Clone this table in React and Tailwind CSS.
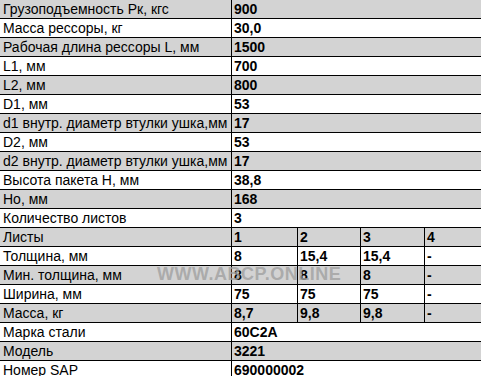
import React from 'react';

const rows = [
  ['Грузоподъемность Рк, кгс', '900'],
  ['Масса рессоры, кг', '30,0'],
  ['Рабочая длина рессоры L, мм', '1500'],
  ['L1, мм', '700'],
  ['L2, мм', '800'],
  ['D1, мм', '53'],
  ['d1 внутр. диаметр втулки ушка,мм', '17'],
  ['D2, мм', '53'],
  ['d2 внутр. диаметр втулки ушка,мм', '17'],
  ['Высота пакета H, мм', '38,8'],
  ['Но, мм', '168'],
  ['Количество листов', '3'],
  ['Листы', ['1', '2', '3', '4']],
  ['Толщина, мм', ['8', '15,4', '15,4', '-']],
  ['Мин. толщина, мм', ['8', '8', '8', '-']],
  ['Ширина, мм', ['75', '75', '75', '-']],
  ['Масса, кг', ['8,7', '9,8', '9,8', '-']],
  ['Марка стали', '60C2A'],
  ['Модель', '3221'],
  ['Номер SAP', '690000002'],
];

const subWidths = ['w-[66px]', 'w-[63px]', 'w-[64px]', 'flex-1'];

export default function App() {
  return (
    <div className="relative w-[481px] h-[376px] overflow-hidden bg-white text-black text-[14px] font-['Liberation_Sans',Arial,sans-serif]">
      {rows.map(([label, value], i) => (
        <div
          key={label}
          className={`flex h-[19px] border-b border-black leading-[18px] ${i % 2 === 0 ? 'bg-[#d3d3d3]' : 'bg-white'}`}
        >
          <div className="w-[232px] shrink-0 border-r border-black pl-[3px] whitespace-nowrap overflow-hidden">
            {label}
          </div>
          {Array.isArray(value) ? (
            value.map((v, j) => (
              <div
                key={j}
                className={`${subWidths[j]} shrink-0 pl-[2px] font-bold ${j < 3 ? 'border-r border-black' : ''}`}
              >
                {v}
              </div>
            ))
          ) : (
            <div className="flex-1 pl-[2px] font-bold">{value}</div>
          )}
        </div>
      ))}

      {/* водяной знак */}
      <div className="absolute left-[157px] top-[263px] text-[18px] leading-[22px] font-bold tracking-[0.5px] text-[#a0a0a0]/80 whitespace-nowrap pointer-events-none">
        WWW.ABCP.ONLINE
      </div>
    </div>
  );
}
